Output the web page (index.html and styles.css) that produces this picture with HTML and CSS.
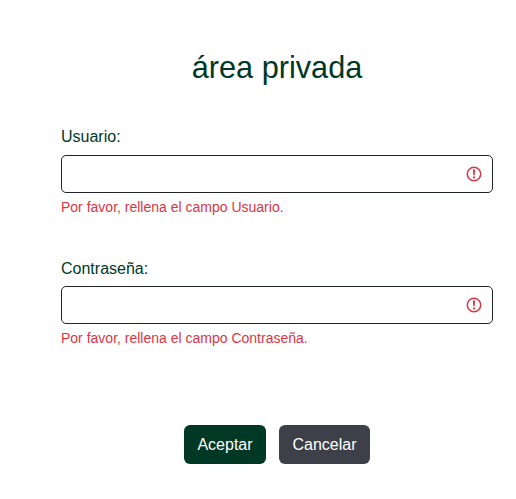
FILE: index.html
```html
<!DOCTYPE html>
<html lang="es">
<head>
<meta charset="utf-8">
<title>área privada</title>
<link rel="stylesheet" href="styles.css">
</head>
<body>
<form class="login">
  <h1 class="title">área privada</h1>
  <div class="field">
    <label class="label" for="user">Usuario:</label>
    <div class="control">
      <input class="input" id="user" type="text">
      <svg class="alert" viewBox="0 0 16 16"><circle cx="8" cy="8" r="6.7"/><path class="mark" d="M6.9 3.6h2.2L8.7 9.3H7.3z"/><circle class="mark" cx="8" cy="11.4" r="1.05"/></svg>
    </div>
    <p class="error">Por favor, rellena el campo Usuario.</p>
  </div>
  <div class="field">
    <label class="label" for="pass">Contraseña:</label>
    <div class="control">
      <input class="input" id="pass" type="password">
      <svg class="alert" viewBox="0 0 16 16"><circle cx="8" cy="8" r="6.7"/><path class="mark" d="M6.9 3.6h2.2L8.7 9.3H7.3z"/><circle class="mark" cx="8" cy="11.4" r="1.05"/></svg>
    </div>
    <p class="error">Por favor, rellena el campo Contraseña.</p>
  </div>
  <div class="actions">
    <button class="btn accept" type="button">Aceptar</button>
    <button class="btn cancel" type="button">Cancelar</button>
  </div>
</form>
</body>
</html>
```
FILE: styles.css
```css
* { box-sizing: border-box; }
body {
  margin: 0;
  background: #fff;
  color: #003826;
  font: 16px/24px "Liberation Sans", Arial, sans-serif;
}
.login { width: 432px; margin: 0 0 0 61px; padding-top: 48px; }
.title { margin: 0 0 38px; font-size: 30.7px; line-height: 39px; font-weight: 400; text-align: center; }
.field { height: 132px; }
.field + .field { height: 168px; }
.label { display: block; height: 30px; }
.field + .field .label { height: 29px; }
.control {
  display: flex;
  align-items: center;
  height: 38px;
  padding-right: 10px;
  border: 1px solid #212529;
  border-radius: 5px;
}
.input { flex: 1; min-width: 0; height: 100%; padding: 0 12px; border: 0; outline: 0; background: transparent; font: inherit; }
.alert { width: 16px; height: 16px; fill: none; stroke: #dc3545; stroke-width: 1.5; }
.mark { fill: #dc3545; stroke: none; }
.error { margin: 4px 0 0; font-size: 14px; line-height: 21px; color: #dc3545; }
.actions { display: flex; justify-content: center; gap: 13px; }
.btn { height: 39px; padding: 0; border: 0; border-radius: 6px; color: #fff; font: inherit; }
.accept { width: 82px; background: #003826; }
.cancel { width: 91px; background: #3d4049; }
```
